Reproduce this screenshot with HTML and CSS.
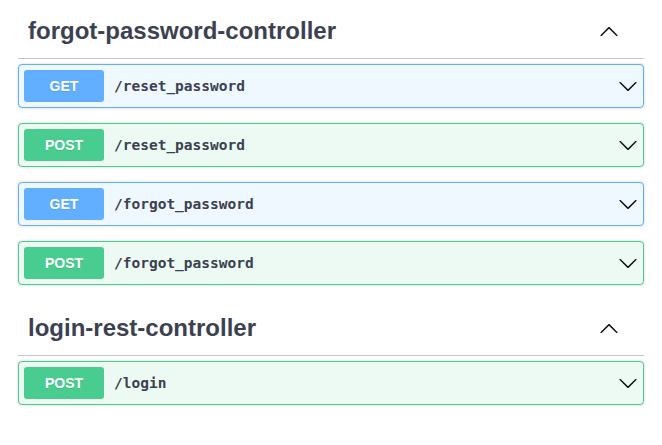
FILE: index.html
```html
<!DOCTYPE html>
<html lang="en">
<head>
<meta charset="utf-8">
<title>Swagger UI</title>
<link rel="stylesheet" href="styles.css">
</head>
<body>
<div class="wrapper">
  <section class="tag-section">
    <h3 class="tag">
      <span class="tag-name">forgot-password-controller</span>
      <svg class="arrow-up" width="20" height="20" viewBox="0 0 20 20"><path d="M17.418 14.908c.272.268.709.268.979 0s.271-.701 0-.969l-7.908-7.83c-.27-.268-.707-.268-.979 0l-7.908 7.83c-.27.268-.27.701 0 .969.271.268.709.268.979 0L10 7.767l7.418 7.141z"/></svg>
    </h3>
    <div class="opblock get">
      <span class="method">GET</span>
      <span class="path">/reset_password</span>
      <svg class="arrow-down" width="20" height="20" viewBox="0 0 20 20"><path d="M17.418 6.109c.272-.268.709-.268.979 0s.271.701 0 .969l-7.908 7.83c-.27.268-.707.268-.979 0l-7.908-7.83c-.27-.268-.27-.701 0-.969.271-.268.709-.268.979 0L10 13.25l7.418-7.141z"/></svg>
    </div>
    <div class="opblock post">
      <span class="method">POST</span>
      <span class="path">/reset_password</span>
      <svg class="arrow-down" width="20" height="20" viewBox="0 0 20 20"><path d="M17.418 6.109c.272-.268.709-.268.979 0s.271.701 0 .969l-7.908 7.83c-.27.268-.707.268-.979 0l-7.908-7.83c-.27-.268-.27-.701 0-.969.271-.268.709-.268.979 0L10 13.25l7.418-7.141z"/></svg>
    </div>
    <div class="opblock get">
      <span class="method">GET</span>
      <span class="path">/forgot_password</span>
      <svg class="arrow-down" width="20" height="20" viewBox="0 0 20 20"><path d="M17.418 6.109c.272-.268.709-.268.979 0s.271.701 0 .969l-7.908 7.83c-.27.268-.707.268-.979 0l-7.908-7.830c-.27-.268-.27-.701 0-.969.271-.268.709-.268.979 0L10 13.25l7.418-7.141z"/></svg>
    </div>
    <div class="opblock post">
      <span class="method">POST</span>
      <span class="path">/forgot_password</span>
      <svg class="arrow-down" width="20" height="20" viewBox="0 0 20 20"><path d="M17.418 6.109c.272-.268.709-.268.979 0s.271.701 0 .969l-7.908 7.83c-.27.268-.707.268-.979 0l-7.908-7.83c-.27-.268-.27-.701 0-.969.271-.268.709-.268.979 0L10 13.25l7.418-7.141z"/></svg>
    </div>
  </section>
  <section class="tag-section">
    <h3 class="tag">
      <span class="tag-name">login-rest-controller</span>
      <svg class="arrow-up" width="20" height="20" viewBox="0 0 20 20"><path d="M17.418 14.908c.272.268.709.268.979 0s.271-.701 0-.969l-7.908-7.83c-.27-.268-.707-.268-.979 0l-7.908 7.83c-.27.268-.27.701 0 .969.271.268.709.268.979 0L10 7.767l7.418 7.141z"/></svg>
    </h3>
    <div class="opblock post">
      <span class="method">POST</span>
      <span class="path">/login</span>
      <svg class="arrow-down" width="20" height="20" viewBox="0 0 20 20"><path d="M17.418 6.109c.272-.268.709-.268.979 0s.271.701 0 .969l-7.908 7.83c-.27.268-.707.268-.979 0l-7.908-7.83c-.27-.268-.27-.701 0-.969.271-.268.709-.268.979 0L10 13.25l7.418-7.141z"/></svg>
    </div>
  </section>
</div>
</body>
</html>
```

FILE: styles.css
```css
html, body {
  margin: 0;
  padding: 0;
  background: #fff;
}

body {
  font-family: "Liberation Sans", Arial, sans-serif;
  color: #3b4151;
}

.wrapper {
  padding: 3px 18px 0;
}

.tag-section {
  display: flex;
  flex-direction: column;
}

.tag {
  display: flex;
  align-items: center;
  margin: 0 0 5px;
  padding: 13px 25px 13px 10px;
  font-size: 24px;
  line-height: 29px;
  font-weight: 700;
  color: #3b4151;
  border-bottom: 1px solid rgba(59, 65, 81, 0.3);
}

.tag-name {
  flex: 1;
}

.arrow-up {
  flex: none;
  fill: #111;
}

.opblock {
  display: flex;
  align-items: center;
  height: 44px;
  box-sizing: border-box;
  padding: 5px 5px 5px 5px;
  margin: 0 0 15px;
  border: 1px solid;
  border-radius: 4px;
  box-shadow: 0 0 3px rgba(0, 0, 0, 0.19);
}

.opblock.get {
  background: #eff7ff;
  border-color: #61affe;
}

.opblock.post {
  background: #edfaf4;
  border-color: #49cc90;
}

.method {
  flex: none;
  width: 80px;
  height: 32px;
  box-sizing: border-box;
  display: flex;
  align-items: center;
  justify-content: center;
  border-radius: 3px;
  font-size: 14px;
  font-weight: 700;
  color: #fff;
  text-shadow: 0 1px 0 rgba(0, 0, 0, 0.1);
}

.get .method {
  background: #61affe;
}

.post .method {
  background: #49cc90;
}

.path {
  flex: 1;
  padding: 0 10px;
  font-family: "DejaVu Sans Mono", "Liberation Mono", monospace;
  font-size: 14.5px;
  font-weight: 700;
  color: #3b4151;
}

.arrow-down {
  flex: none;
  fill: #111;
}
```
